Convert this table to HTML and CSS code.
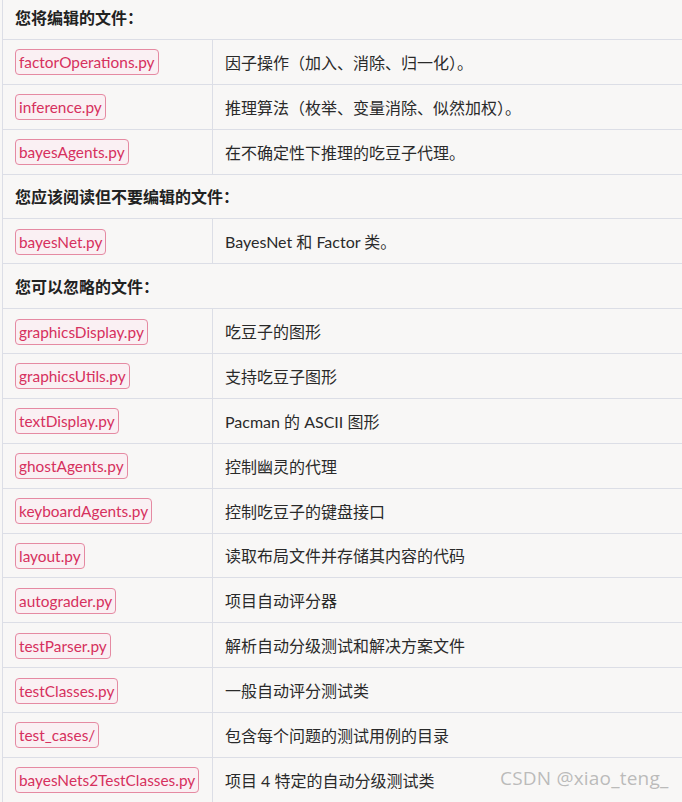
FILE: index.html
```html
<!DOCTYPE html>
<html lang="zh">
<head>
<meta charset="utf-8">
<link rel="stylesheet" href="styles.css">
</head>
<body>
<div class="page">
<table class="files">
  <colgroup><col class="col-name"><col class="col-desc"></colgroup>
  <tr class="section"><td colspan="2">您将编辑的文件：</td></tr>
  <tr><td class="name"><code>factorOperations.py</code></td><td class="desc">因子操作（加入、消除、归一化）。</td></tr>
  <tr><td class="name"><code>inference.py</code></td><td class="desc">推理算法（枚举、变量消除、似然加权）。</td></tr>
  <tr><td class="name"><code>bayesAgents.py</code></td><td class="desc">在不确定性下推理的吃豆子代理。</td></tr>
  <tr class="section"><td colspan="2">您应该阅读但不要编辑的文件：</td></tr>
  <tr><td class="name"><code>bayesNet.py</code></td><td class="desc">BayesNet 和 Factor 类。</td></tr>
  <tr class="section"><td colspan="2">您可以忽略的文件：</td></tr>
  <tr><td class="name"><code>graphicsDisplay.py</code></td><td class="desc">吃豆子的图形</td></tr>
  <tr><td class="name"><code>graphicsUtils.py</code></td><td class="desc">支持吃豆子图形</td></tr>
  <tr><td class="name"><code>textDisplay.py</code></td><td class="desc">Pacman 的 ASCII 图形</td></tr>
  <tr><td class="name"><code>ghostAgents.py</code></td><td class="desc">控制幽灵的代理</td></tr>
  <tr><td class="name"><code>keyboardAgents.py</code></td><td class="desc">控制吃豆子的键盘接口</td></tr>
  <tr><td class="name"><code>layout.py</code></td><td class="desc">读取布局文件并存储其内容的代码</td></tr>
  <tr><td class="name"><code>autograder.py</code></td><td class="desc">项目自动评分器</td></tr>
  <tr><td class="name"><code>testParser.py</code></td><td class="desc">解析自动分级测试和解决方案文件</td></tr>
  <tr><td class="name"><code>testClasses.py</code></td><td class="desc">一般自动评分测试类</td></tr>
  <tr><td class="name"><code>test_cases/</code></td><td class="desc">包含每个问题的测试用例的目录</td></tr>
  <tr><td class="name"><code>bayesNets2TestClasses.py</code></td><td class="desc">项目 4 特定的自动分级测试类</td></tr>
</table>
<div class="watermark">CSDN @xiao_teng_</div>
</div>
</body>
</html>
```

FILE: styles.css
```css
html, body {
  margin: 0;
  padding: 0;
  background: #f8f7f6;
}
body {
  width: 682px;
  height: 802px;
  overflow: hidden;
  font-family: "Lato", "Noto Sans CJK SC", sans-serif;
  font-size: 16px;
  color: #2c2c2c;
}
.page {
  position: relative;
  height: 802px;
  overflow: hidden;
}
.files {
  border-collapse: collapse;
  table-layout: fixed;
  margin-top: -6px;
  margin-left: 2px;
  width: 720px;
}
.col-name {
  width: 210px;
}
.files td {
  border: 1px solid #dcdee6;
  height: 44.88px;
  padding: 0 12px;
  box-sizing: border-box;
  vertical-align: middle;
  white-space: nowrap;
}
.section td {
  font-weight: bold;
  color: #222;
}
.desc {
  color: #2a2a2a;
}
code {
  font-family: "Lato", "Noto Sans CJK SC", sans-serif;
  font-size: 15.4px;
  color: #d6315e;
  background: #faf0f3;
  border: 1px solid #e58aa2;
  border-radius: 4px;
  padding: 3px 3px 3px 3px;
}
.watermark {
  position: absolute;
  left: 500px;
  top: 765px;
  font-family: "Open Sans", sans-serif;
  font-size: 19px;
  color: rgba(160, 160, 160, 0.7);
  letter-spacing: 0.2px;
}
```
